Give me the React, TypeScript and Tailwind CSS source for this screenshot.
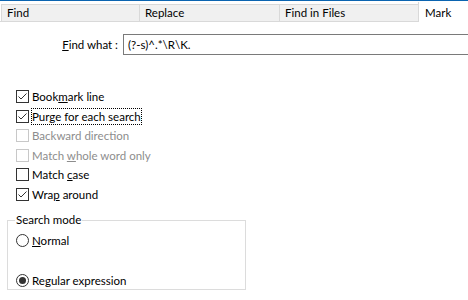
const FONT = "font-['Lato',sans-serif]";

const TABS = [
  { label: "Find", w: "w-[138px]" },
  { label: "Replace", w: "w-[140px]" },
  { label: "Find in Files", w: "w-[139px]" },
];

function CheckMark() {
  return (
    <svg width="11" height="11" viewBox="0 0 11 11" className="absolute left-[0px] top-[0px]">
      <path d="M1.5 5.5 L4 8 L9.5 2.5" fill="none" stroke="#333" strokeWidth="1" />
    </svg>
  );
}

function Check({
  label,
  checked,
  disabled,
  focused,
}: {
  label: React.ReactNode;
  checked?: boolean;
  disabled?: boolean;
  focused?: boolean;
}) {
  return (
    <div className="flex items-center h-[19.5px] pl-[16px]">
      <div
        className={`relative w-[13px] h-[13px] bg-white border ${
          disabled ? "border-[#c8c8c8]" : "border-[#333]"
        }`}
      >
        {checked && <CheckMark />}
      </div>
      <span
        className={`ml-[3px] leading-[15px] ${disabled ? "text-[#8d8d8d]" : "text-black"} ${
          focused ? "outline outline-1 outline-dotted outline-black" : ""
        }`}
      >
        {label}
      </span>
    </div>
  );
}

function Radio({ label, selected }: { label: React.ReactNode; selected?: boolean }) {
  return (
    <div className="flex items-center pl-[8px] h-[15px]">
      <div className="w-[13px] h-[13px] rounded-full border border-[#333] bg-white flex items-center justify-center">
        {selected && <div className="w-[7px] h-[7px] rounded-full bg-[#333]" />}
      </div>
      <span className="ml-[3px]">{label}</span>
    </div>
  );
}

export default function App() {
  return (
    <div className={`w-[468px] h-[300px] bg-white overflow-hidden text-[11.5px] ${FONT}`}>
      <div className="h-px bg-[#0b64b0]" />

      {/* Tab strip */}
      <div className="flex items-end h-[20px] mt-px">
        <div className="flex pl-px h-[18px] border-b border-[#d9d9d9]">
          {TABS.map((t) => (
            <div
              key={t.label}
              className={`${t.w} bg-[#f0f0f0] border-t border-l border-[#d9d9d9] pl-[5px] flex items-center`}
            >
              {t.label}
            </div>
          ))}
        </div>
        <div className="flex-1 h-[20px] bg-white border-l border-[#d9d9d9] pl-[6px] pt-[2px]">Mark</div>
      </div>

      {/* Find what */}
      <div className="flex items-center mt-[12px] h-[21px]">
        <div className="w-[123px] pr-[5px] text-right">
          <span className="underline">F</span>ind what :
        </div>
        <div className="flex-1 h-[21px] border border-r-0 border-[#7a7a7a] pl-[4px] flex items-center">
          (?-s)^.*\R\K.
        </div>
      </div>

      {/* Options */}
      <div className="mt-[32px]">
        <Check label={<>Book<span className="underline">m</span>ark line</>} checked />
        <Check label="Purge for each search" checked focused />
        <Check label="Backward direction" disabled />
        <Check label={<>Match <span className="underline">w</span>hole word only</>} disabled />
        <Check label={<>Match <span className="underline">c</span>ase</>} />
        <Check label={<>Wra<span className="underline">p</span> around</>} checked />
      </div>

      {/* Search mode group */}
      <div className="relative ml-[7px] mt-[16px] w-[239px] h-[70px] border border-[#dcdcdc]">
        <div className="absolute left-[7px] top-[-8px] bg-white px-px leading-[14px]">Search mode</div>
        <div className="pt-[12px] flex flex-col gap-[25px]">
          <Radio label={<><span className="underline">N</span>ormal</>} />
          <Radio label={<>Re<span className="underline">g</span>ular expression</>} selected />
        </div>
      </div>
    </div>
  );
}
